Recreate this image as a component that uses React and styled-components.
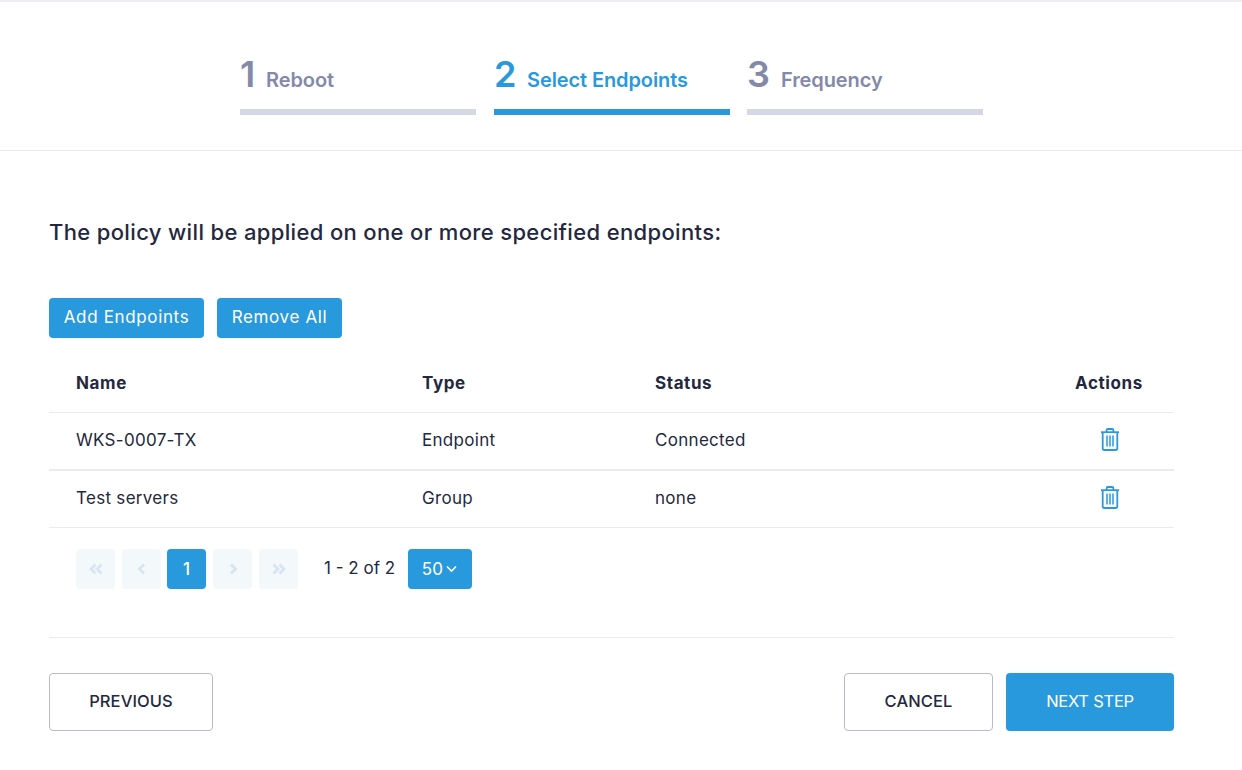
import React from "react";
import styled, { createGlobalStyle } from "styled-components";

const FONT = `Inter, "Noto Sans", "Liberation Sans", sans-serif`;

const GlobalStyle = createGlobalStyle`
  html, body {
    margin: 0;
    padding: 0;
    background: #fff;
    font-family: ${FONT};
    color: #24283f;
  }
  * { box-sizing: border-box; }
`;

const Page = styled.div`
  width: 1242px;
  height: 770px;
  border-top: 2px solid #eceef2;
  overflow: hidden;
`;

const Steps = styled.div`
  display: flex;
  height: 149px;
  padding: 51px 0 0 240px;
  border-bottom: 1px solid #e9eaf0;
`;

const Step = styled.div`
  width: 236px;
  margin-right: ${(p) => p.$gap}px;
  height: 62px;
  border-bottom: 6px solid ${(p) => (p.$active ? "#2899dd" : "#d6d7e5")};
  color: ${(p) => (p.$active ? "#2899dd" : "#8489a9")};
  display: flex;
  align-items: baseline;
`;

const StepNumber = styled.span`
  font-size: 36px;
  line-height: 42px;
  font-weight: 600;
  width: ${(p) => p.$w}px;
`;

const StepLabel = styled.span`
  font-size: 20px;
  font-weight: 600;
  letter-spacing: -0.1px;
`;

const Body = styled.div`
  padding: 0 68px 0 49px;
`;

const Intro = styled.p`
  margin: 68px 0 0;
  font-size: 22px;
  line-height: 26px;
  font-weight: 500;
  height: 26px;
  letter-spacing: 0.35px;
`;

const Toolbar = styled.div`
  display: flex;
  gap: 13px;
  margin-top: 53px;
`;

const SmallButton = styled.button`
  height: 40px;
  width: ${(p) => p.$w}px;
  border: 0;
  border-radius: 4px;
  background: #2899dd;
  color: #fff;
  font-family: ${FONT};
  font-size: 17px;
  letter-spacing: 0.65px;
  padding: 0 0 2px;
`;

const Row = styled.div`
  display: grid;
  grid-template-columns: 346px 233px 1fr 98px;
  padding: ${(p) => (p.$head ? "16px 0 0 27px" : "0 0 2px 27px")};
  align-items: center;
  height: ${(p) => p.$h}px;
  border-bottom: ${(p) => p.$line || 1}px solid #e9ebef;
  font-size: 17px;
  font-weight: ${(p) => (p.$head ? 700 : 400)};
  letter-spacing: ${(p) => (p.$head ? 0.6 : 0.3)}px;
`;

const ActionCell = styled.div`
  display: flex;
  justify-content: ${(p) => (p.$head ? "flex-start" : "center")};
  padding: ${(p) => (p.$head ? "0" : "0 30px 2px 0")};
  margin-left: ${(p) => (p.$head ? -1 : 0)}px;
`;

const Pager = styled.div`
  display: flex;
  padding: 21px 0 0 27px;
  height: 110px;
  align-items: flex-start;
  border-bottom: 1px solid #e9ebef;
`;

const PageButton = styled.div`
  width: 39px;
  height: 40px;
  margin-right: ${(p) => p.$gap ?? 7}px;
  border-radius: 4px;
  background: ${(p) => (p.$active ? "#2899dd" : "#f3f8fb")};
  color: ${(p) => (p.$active ? "#fff" : "#d6e5f1")};
  font-size: 17px;
  font-weight: 500;
  display: flex;
  align-items: center;
  justify-content: center;
`;

const PageInfo = styled.span`
  margin-left: 19px;
  width: 84px;
  line-height: 38px;
  font-size: 17px;
`;

const SizeSelect = styled.div`
  width: 64px;
  height: 40px;
  border-radius: 4px;
  background: #2899dd;
  color: #fff;
  font-size: 17px;
  letter-spacing: 0.3px;
  display: flex;
  align-items: center;
  justify-content: center;
  gap: 3px;
  padding-right: 1px;
`;

const Footer = styled.div`
  display: flex;
  justify-content: space-between;
  margin-top: 35px;
`;

const FooterGroup = styled.div`
  display: flex;
  gap: 13px;
`;

const FooterButton = styled.button`
  height: 58px;
  width: ${(p) => p.$w}px;
  border-radius: 4px;
  border: ${(p) => (p.$primary ? "0" : "1px solid #b9bbcf")};
  background: ${(p) => (p.$primary ? "#2899dd" : "#fff")};
  color: ${(p) => (p.$primary ? "#fff" : "#24283f")};
  font-family: ${FONT};
  font-size: 16.5px;
  font-weight: ${(p) => (p.$primary ? 400 : 500)};
  letter-spacing: ${(p) => (p.$primary ? -0.25 : 0.1)}px;
  padding: 0 0 2px;
`;

const Chevron = ({ double, flip }) => (
  <svg
    width="16"
    height="14"
    viewBox="0 0 16 14"
    fill="none"
    stroke="currentColor"
    strokeWidth="2.8"
    style={{ transform: flip ? "scaleX(-1)" : "none" }}
  >
    {double ? (
      <>
        <path d="M7.5 2.5 3 7l4.5 4.5" />
        <path d="M13.5 2.5 9 7l4.5 4.5" />
      </>
    ) : (
      <path d="M10 2.5 5.5 7l4.5 4.5" />
    )}
  </svg>
);

const TrashIcon = () => (
  <svg width="20" height="23" viewBox="0 0 20 23" fill="none" stroke="#2899dd" strokeWidth="1.8">
    <path d="M1 4.2h18" />
    <path d="M6.6 4V2.4c0-.8.6-1.4 1.4-1.4h4c.8 0 1.4.6 1.4 1.4V4" />
    <path d="M2.7 4.5v15.7c0 1 .8 1.8 1.8 1.8h11c1 0 1.8-.8 1.8-1.8V4.5" />
    <path d="M7 7.5v11M10 7.5v11M13 7.5v11" strokeWidth="1.5" />
  </svg>
);

const rows = [
  { name: "WKS-0007-TX", type: "Endpoint", status: "Connected", h: 58, line: 2 },
  { name: "Test servers", type: "Group", status: "none", h: 57, line: 1 },
];

export default function App() {
  return (
    <Page>
      <GlobalStyle />
      <Steps>
        <Step $gap={18}>
          <StepNumber $w={26}>1</StepNumber>
          <StepLabel>Reboot</StepLabel>
        </Step>
        <Step $gap={17} $active>
          <StepNumber $w={33}>2</StepNumber>
          <StepLabel>Select Endpoints</StepLabel>
        </Step>
        <Step $gap={0}>
          <StepNumber $w={34}>3</StepNumber>
          <StepLabel>Frequency</StepLabel>
        </Step>
      </Steps>
      <Body>
        <Intro>The policy will be applied on one or more specified endpoints:</Intro>
        <Toolbar>
          <SmallButton $w={155}>Add Endpoints</SmallButton>
          <SmallButton $w={125}>Remove All</SmallButton>
        </Toolbar>
        <Row $head $h={75}>
          <div>Name</div>
          <div>Type</div>
          <div>Status</div>
          <ActionCell $head>Actions</ActionCell>
        </Row>
        {rows.map((row) => (
          <Row key={row.name} $h={row.h} $line={row.line}>
            <div>{row.name}</div>
            <div>{row.type}</div>
            <div>{row.status}</div>
            <ActionCell>
              <TrashIcon />
            </ActionCell>
          </Row>
        ))}
        <Pager>
          <PageButton><Chevron double /></PageButton>
          <PageButton $gap={6}><Chevron /></PageButton>
          <PageButton $active $gap={7}>1</PageButton>
          <PageButton><Chevron flip /></PageButton>
          <PageButton $gap={7}><Chevron double flip /></PageButton>
          <PageInfo>1 - 2 of 2</PageInfo>
          <SizeSelect>
            50
            <svg width="11" height="8" viewBox="0 0 11 8" fill="none" stroke="currentColor" strokeWidth="1.6">
              <path d="M1 1.5 5.5 6 10 1.5" />
            </svg>
          </SizeSelect>
        </Pager>
        <Footer>
          <FooterButton $w={164}>PREVIOUS</FooterButton>
          <FooterGroup>
            <FooterButton $w={149}>CANCEL</FooterButton>
            <FooterButton $w={168} $primary>NEXT STEP</FooterButton>
          </FooterGroup>
        </Footer>
      </Body>
    </Page>
  );
}
